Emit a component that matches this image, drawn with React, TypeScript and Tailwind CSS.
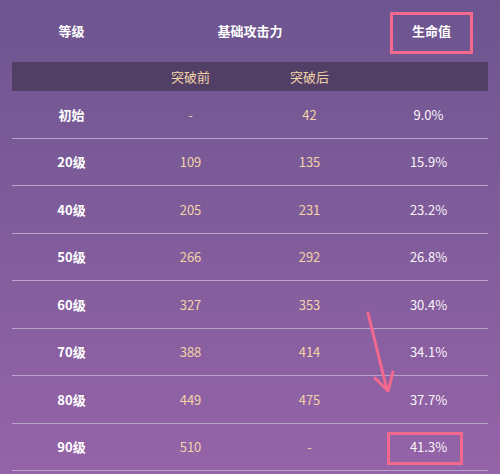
import React from "react";

const rows: [string, string, string, string][] = [
  ["初始", "-", "42", "9.0%"],
  ["20级", "109", "135", "15.9%"],
  ["40级", "205", "231", "23.2%"],
  ["50级", "266", "292", "26.8%"],
  ["60级", "327", "353", "30.4%"],
  ["70级", "388", "414", "34.1%"],
  ["80级", "449", "475", "37.7%"],
  ["90级", "510", "-", "41.3%"],
];

export default function App() {
  return (
    <div
      className="relative w-[500px] h-[474px] overflow-hidden bg-gradient-to-b from-[#6d558f] to-[#9564a8] text-[13px]"
      style={{ fontFamily: '"Microsoft YaHei", "Noto Sans CJK SC", "Noto Sans", sans-serif' }}
    >
      <div className="px-[12px]">
        <div className="grid grid-cols-4 h-[62px] items-center font-bold text-white">
          <div className="text-center">等级</div>
          <div className="col-span-2 text-center">基础攻击力</div>
          <div className="text-center pl-[6px]">生命值</div>
        </div>
        <div className="grid grid-cols-4 h-[29px] items-center bg-[#523f66] text-[#f2d3a8]">
          <div />
          <div className="text-center">突破前</div>
          <div className="text-center">突破后</div>
          <div />
        </div>
        {rows.map((r) => (
          <div
            key={r[0]}
            className="grid grid-cols-4 h-[47.5px] items-center border-b border-[#b9a2cc]"
          >
            <div className="text-center font-bold text-white">{r[0]}</div>
            <div className="text-center text-[#f2d3a8]">{r[1]}</div>
            <div className="text-center text-[#f2d3a8]">{r[2]}</div>
            <div className="text-center text-[#fbf4fb]">{r[3]}</div>
          </div>
        ))}
      </div>

      <div className="absolute left-[390px] top-[12px] w-[83px] h-[42px] border-[3px] border-[#f46a8e]" />
      <div className="absolute left-[387px] top-[432px] w-[76px] h-[33px] border-[3px] border-[#f46a8e]" />

      <svg className="absolute left-0 top-0" width="500" height="474" viewBox="0 0 500 474">
        <path
          d="M368 313 L387 390"
          stroke="#f2688e"
          strokeWidth="3"
          strokeLinecap="round"
          fill="none"
        />
        <path
          d="M375 378 L388 391 L393 372"
          stroke="#f2688e"
          strokeWidth="3"
          strokeLinecap="round"
          strokeLinejoin="round"
          fill="none"
        />
      </svg>
    </div>
  );
}
